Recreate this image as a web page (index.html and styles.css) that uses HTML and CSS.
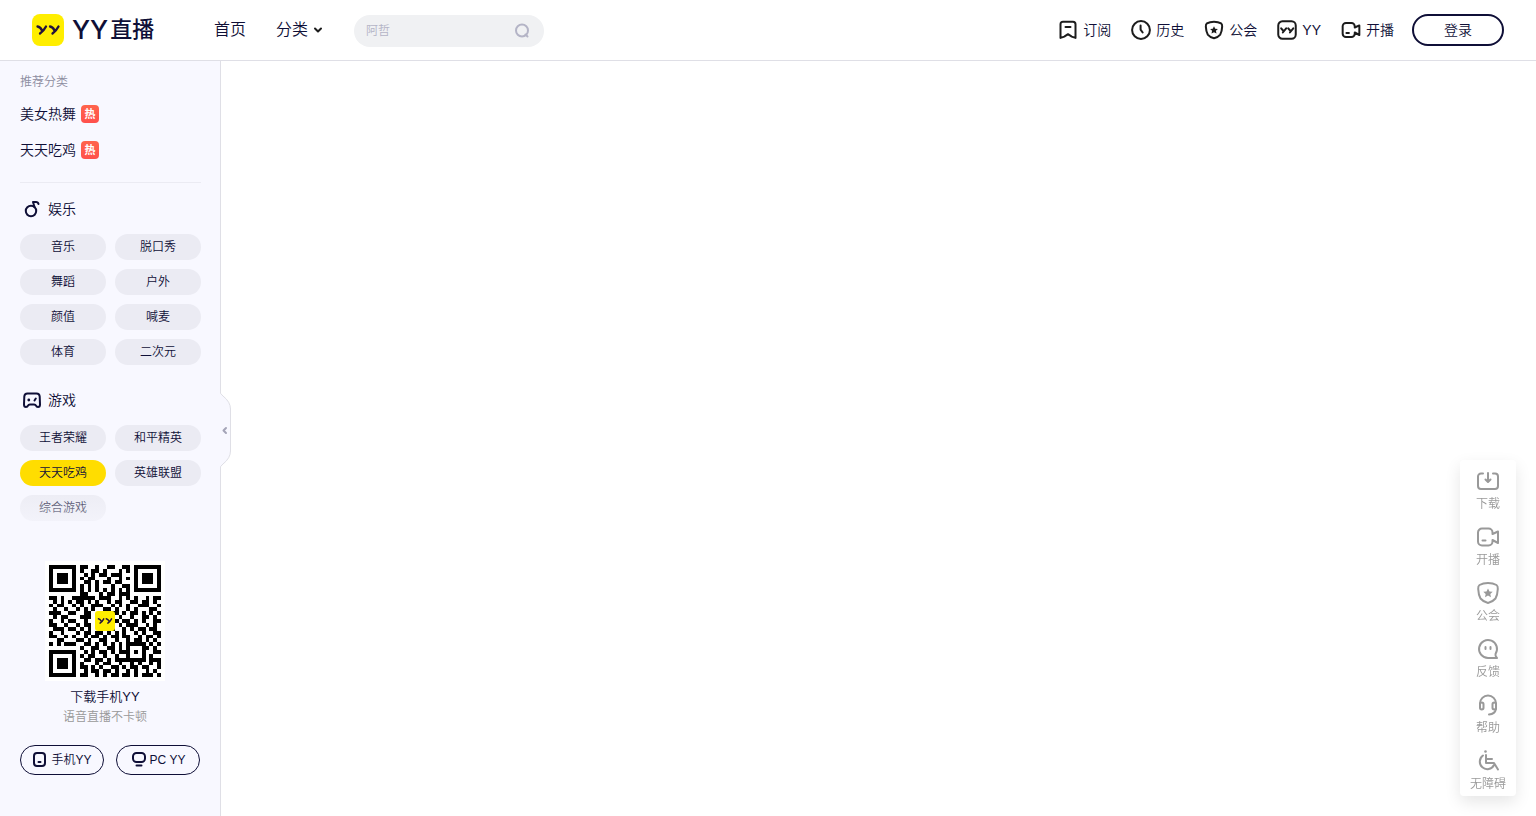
FILE: index.html
```html
<!DOCTYPE html>
<html lang="zh-CN">
<head>
    <meta charset="UTF-8">
    <meta name="viewport" content="width=device-width, initial-scale=1.0">
    <title>YY直播</title>
    <link rel="stylesheet" href="styles.css">
</head>
<body>

    <!-- icons used more than once -->
    <svg class="sprite" aria-hidden="true">
        <symbol id="icon-yy" viewBox="0 0 32 32">
            <path d="M5.500 12.500Q8.500 13 10 16.500M14 12.500Q12 16.500 8 19.500M18 12.500Q21 13 22.500 16.500M26.500 12.500Q24.500 16.500 20.500 19.500" fill="none" stroke="#23123c" stroke-width="2.300" stroke-linecap="round"/>
        </symbol>
        <symbol id="icon-camera" viewBox="0 0 24 24">
            <path d="M16.500 9V7.500a4 4 0 0 0-4-4H6a4 4 0 0 0-4 4v9a4 4 0 0 0 4 4h6.500a4 4 0 0 0 4-4V15l5.500 3V6.500L16.500 9M6.500 15.500h3"/>
        </symbol>
        <symbol id="icon-guild" viewBox="0 0 24 24">
            <path d="M12 2Q7 2 3.500 4Q2 5 2.200 8Q2.500 14 4.500 17.500Q7.500 21 12 22Q16.500 21 19.500 17.500Q21.500 14 21.800 8Q22 5 20.500 4Q17 2 12 2z"/>
            <path class="solid" d="M12 7.500l1.500 2.900 3.200.4-2.400 2.200.7 3.300-3-1.700-3 1.700.7-3.300-2.400-2.200 3.200-.4z"/>
        </symbol>
    </svg>

    <header class="header">
        <a class="logo" href="#">
            <svg class="logo-mark" viewBox="0 0 32 32" aria-hidden="true"><use href="#icon-yy"/></svg>
            <span class="logo-text"><span class="logo-yy">YY</span>直播</span>
        </a>
        <nav class="nav">
            <a href="#">首页</a>
            <a href="#">分类
                <svg class="arrow" viewBox="0 0 10 8" aria-hidden="true"><path d="M2 2.500l3 3 3-3"/></svg>
            </a>
        </nav>
        <form class="search">
            <input type="text" placeholder="阿哲" aria-label="搜索">
            <button type="button" aria-label="搜索">
                <svg viewBox="0 0 16 16"><circle cx="8" cy="7.500" r="6"/><path d="M11.500 11.500l2 2"/></svg>
            </button>
        </form>
        <nav class="user-nav">
            <a href="#">
                <svg viewBox="0 0 24 24"><path d="M6 2h12a3 3 0 0 1 3 3v16.500l-4.500-1.500-4.500-3-4.500 3-4.500 1.500V5a3 3 0 0 1 3-3zM9 8.500h6"/></svg>订阅
            </a>
            <a href="#">
                <svg viewBox="0 0 24 24"><circle cx="12" cy="12" r="10.700"/><path d="M11.500 6.500v5l2.500 3.500"/></svg>历史
            </a>
            <a href="#"><svg viewBox="0 0 24 24"><use href="#icon-guild"/></svg>公会</a>
            <a href="#">
                <svg viewBox="0 0 24 24"><rect x="1.500" y="1.500" width="21" height="21" rx="5"/><path d="M5 10l3 3.500M11 10l-4 5M13.500 10l3 3.500M19.500 10l-4 5"/></svg>YY
            </a>
            <a href="#"><svg viewBox="0 0 24 24"><use href="#icon-camera"/></svg>开播</a>
        </nav>
        <button class="login" type="button">登录</button>
    </header>

    <div class="page">
        <aside class="sidebar">
            <div class="menu">
                <h2 class="menu-title">推荐分类</h2>
                <ul class="hot-list">
                    <li><a href="#">美女热舞<span class="hot">热</span></a></li>
                    <li><a href="#">天天吃鸡<span class="hot">热</span></a></li>
                </ul>

                <section class="group">
                    <h3>
                        <svg viewBox="0 0 24 24"><circle cx="11" cy="14" r="5.200"/><path d="M14.500 10L13 5h3q2 0 2.500 2"/></svg>娱乐
                    </h3>
                    <div class="tags">
                        <a href="#">音乐</a>
                        <a href="#">脱口秀</a>
                        <a href="#">舞蹈</a>
                        <a href="#">户外</a>
                        <a href="#">颜值</a>
                        <a href="#">喊麦</a>
                        <a href="#">体育</a>
                        <a href="#">二次元</a>
                    </div>
                </section>

                <section class="group">
                    <h3>
                        <svg viewBox="0 0 24 24"><path d="M7.500 5.500h9q3 0 3.200 3l.3 8q0 2.500-2 2.500-1.500 0-2-1.300-.5-1.200-2-1.200h-4q-1.500 0-2 1.200-.5 1.300-2 1.300-2 0-2-2.500l.3-8q.2-3 3.200-3zM15.800 10.500l-1.300 2"/><circle class="solid" cx="8.800" cy="12" r="1.400"/></svg>游戏
                    </h3>
                    <div class="tags">
                        <a href="#">王者荣耀</a>
                        <a href="#">和平精英</a>
                        <a class="active" href="#">天天吃鸡</a>
                        <a href="#">英雄联盟</a>
                        <a href="#">综合游戏</a>
                    </div>
                </section>
            </div>

            <div class="download">
                <div class="qr">
                    <svg id="qrcode" viewBox="0 0 29 29" shape-rendering="crispEdges" role="img" aria-label="下载二维码"></svg>
                    <svg class="qr-logo" viewBox="0 0 32 32" aria-hidden="true"><use href="#icon-yy"/></svg>
                </div>
                <p class="download-title">下载手机YY</p>
                <p class="download-text">语音直播不卡顿</p>
            </div>
            <div class="download-links">
                <a href="#">
                    <svg viewBox="0 0 16 16"><rect x="2" y="1" width="11" height="13" rx="3"/><path d="M6.500 10h2"/></svg>手机YY
                </a>
                <a href="#">
                    <svg viewBox="0 0 16 16"><rect x="2" y="1" width="12" height="9" rx="3.500"/><path d="M5.500 13.500h5"/></svg>PC YY
                </a>
            </div>

            <button class="toggle" type="button" aria-label="收起">
                <svg viewBox="0 0 12 78"><path class="toggle-bg" d="M0 0Q0 3 3 5Q10.500 11 10.500 18V60Q10.500 67 3 73Q0 75 0 78"/><path class="toggle-arrow" d="M6 37l-2.500 2.500L6 42"/></svg>
            </button>
        </aside>
        <main class="content"></main>
    </div>

    <nav class="toolbar">
        <a href="#">
            <svg viewBox="0 0 24 24"><path d="M7 4.500H5a3 3 0 0 0-3 3V17a3 3 0 0 0 3 3h14a3 3 0 0 0 3-3V7.500a3 3 0 0 0-3-3h-2M12 4v8M9.500 10.500L12 13l2.500-2.500"/></svg>下载
        </a>
        <a href="#"><svg viewBox="0 0 24 24"><use href="#icon-camera"/></svg>开播</a>
        <a href="#"><svg viewBox="0 0 24 24"><use href="#icon-guild"/></svg>公会</a>
        <a href="#">
            <svg viewBox="0 0 24 24"><path d="M21 21h-9a9 9 0 1 1 7.500-4q-.5 2 1.500 4zM9.500 10v2M14.500 10v2"/></svg>反馈
        </a>
        <a href="#">
            <svg viewBox="0 0 24 24"><path d="M4 12V10.500a8 8 0 0 1 16 0v5.500q-1 5-7 5.500"/><rect x="4" y="9.500" width="3.500" height="7" rx="1.750"/><rect x="16.500" y="9.500" width="3.500" height="7" rx="1.750"/></svg>帮助
        </a>
        <a href="#">
            <svg viewBox="0 0 24 24"><path d="M7 6.500a7.500 7.500 0 1 0 11 9.500M10 6v8h8l4 6.500M10 10h6"/><circle class="solid" cx="9.500" cy="2.500" r="1.300"/></svg>无障碍
        </a>
    </nav>

    <script>
        // Modules du QR code : # = noir
        const rows = [
            '#######.##..#..##..##.#######',
            '#.....#.#..##.#...#.#.#.....#',
            '#.###.#..#.#.##.###...#.###.#',
            '#.###.#.#.##...#..#.#.#.###.#',
            '#.###.#..##.#.##.##...#.###.#',
            '#.....#.#.#.#...#..##.#.....#',
            '#######.#.#.#.#.#.#.#.#######',
            '........##...#.##.###........',
            '##.#..######.###..#.#.#..#.##',
            '.#.#.#.##.#.#..#.##..##.##.#.',
            '#.##..#.#..###..#.#.#..###..#',
            '.#..#..#.#.#..##.#..#.#...##.',
            '###..##..##.....##.#.##.#.#.#',
            '.#.##...###.....#.#..#..##.#.',
            '#..#.##..#......##.##.#.#..##',
            '##..#..#.##.....#.#.###..#.#.',
            '.###.##.#.#.....#..#.#.##.##.',
            '#..#...#.##.##.#.#.#..#.#..##',
            '##..#.#..#.##.#.##.##..#.##.#',
            '..##...##.#..##..#..#.##.#.#.',
            '#.#.###..##.#.#.#.#.#####.#.#',
            '........#..##..##.#.#...##.#.',
            '#######..#.#.##.#.###.#.#..##',
            '#.....#.#.##..#..#..#...#.#..',
            '#.###.#..##.##.#.########.###',
            '#.###.#.#...#.##..#..#.#..#.#',
            '#.###.#.##.#.#..##.#.##.##..#',
            '#.....#..#.##.##.#..#.#..#.#.',
            '#######.##..#.#.##.##.#.###.#'
        ];
        const path = document.createElementNS('http://www.w3.org/2000/svg', 'path');
        let d = '';
        rows.forEach(function(row, y) {
            for (let x = 0; x < row.length; x++) {
                if (row[x] === '#') d += `M${x} ${y}h1v1h-1z`;
            }
        });
        path.setAttribute('d', d);
        document.getElementById('qrcode').appendChild(path);
    </script>

</body>
</html>
```
FILE: styles.css
```css
* {
    box-sizing: border-box;
}
body {
    display: flex;
    flex-direction: column;
    min-height: 100vh;
    margin: 0;
    font-family: "Liberation Sans", "Noto Sans CJK SC", sans-serif;
    font-size: 14px;
    font-weight: 350;
    line-height: 18px;
    color: #0f0f37;
    background-color: #fff;
}
a {
    color: inherit;
    text-decoration: none;
}
h2, h3, p, ul {
    margin: 0;
    padding: 0;
    font-weight: inherit;
    list-style: none;
}
button, input {
    font-family: inherit;
    font-weight: inherit;
    line-height: inherit;
    color: inherit;
}
button {
    padding: 0;
    border: none;
    background: none;
    cursor: pointer;
}
svg {
    flex: none;
    fill: none;
    stroke: currentColor;
    stroke-width: 2;
    stroke-linejoin: round;
    stroke-linecap: round;
}
.sprite {
    display: none;
}
.solid {
    fill: currentColor;
    stroke: none;
}

/* Header */
.header {
    display: flex;
    align-items: center;
    height: 61px;
    padding: 0 32px;
    border-bottom: 1px solid #dfdfe6;
}
.logo {
    display: flex;
    align-items: center;
    gap: 8px;
    width: 182px;
}
.logo-mark {
    width: 32px;
    height: 32px;
    border-radius: 8px;
    background-color: #ffee00;
}
.logo-text {
    display: flex;
    align-items: center;
    gap: 2px;
    font-size: 22px;
    font-weight: 500;
    line-height: 32px;
    white-space: nowrap;
}
.logo-yy {
    font-family: Inter, sans-serif;
    font-size: 26px;
}
.nav {
    display: flex;
    gap: 30px;
    width: 140px;
    font-size: 16px;
}
.nav a {
    display: flex;
    align-items: center;
    gap: 5px;
    white-space: nowrap;
}
.arrow {
    width: 10px;
    height: 8px;
    color: #1c1c1c;
}
.search {
    display: flex;
    align-items: center;
    width: 190px;
    height: 32px;
    margin-top: 2px;
    padding: 0 14px 0 12px;
    border-radius: 16px;
    background-color: #f0f1f3;
}
.search input {
    flex: 1;
    min-width: 0;
    padding: 0;
    border: none;
    outline: none;
    background: none;
    font-size: 12px;
}
.search input::placeholder {
    color: #b4b4c6;
}
.search button {
    display: flex;
    color: #b4b4c6;
}
.search svg {
    width: 16px;
    height: 16px;
}
.user-nav {
    display: flex;
    gap: 20px;
    margin-left: auto;
    margin-right: 18px;
}
.user-nav a {
    display: flex;
    align-items: center;
    gap: 5px;
}
.user-nav svg {
    width: 20px;
    height: 20px;
    color: #1c1c1c;
    stroke-width: 2.4;
}
.login {
    width: 92px;
    height: 32px;
    border: 2px solid #0f0f37;
    border-radius: 16px;
    font-size: 14px;
}

/* Sidebar */
.page {
    display: flex;
    flex: 1;
}
.content {
    flex: 1;
}
.sidebar {
    position: relative;
    width: 221px;
    padding: 10px 19px 0 20px;
    border-right: 1px solid #dfdfe6;
    background-color: #f8f8ff;
}
.menu {
    position: relative;
    padding-bottom: 24px;
}
/* fades out the bottom of the list */
.menu::after {
    content: "";
    position: absolute;
    left: 0;
    right: 0;
    bottom: 0;
    height: 60px;
    background: linear-gradient(rgba(248, 248, 255, 0), #f8f8ff);
    pointer-events: none;
}
.menu-title {
    font-size: 12px;
    line-height: 22px;
    color: #8d8d9f;
}
.hot-list {
    margin-top: 3px;
    padding-bottom: 14px;
    border-bottom: 1px solid #ebebf3;
}
.hot-list a {
    display: flex;
    align-items: center;
    gap: 5px;
    height: 36px;
}
.hot {
    width: 18px;
    height: 18px;
    border-radius: 4px;
    background: linear-gradient(#ff644c, #ff504c);
    color: #fff;
    font-size: 11px;
    font-weight: bold;
    text-align: center;
}
.group h3 {
    display: flex;
    align-items: center;
    gap: 4px;
    height: 51px;
    font-size: 14px;
}
.group + .group {
    margin-top: 9px;
}
.group h3 svg {
    width: 24px;
    height: 24px;
}
.tags {
    display: grid;
    grid-template-columns: 1fr 1fr;
    gap: 9px;
}
.tags a {
    height: 26px;
    border-radius: 13px;
    background-color: #ebebf3;
    font-size: 12px;
    line-height: 26px;
    text-align: center;
}
.tags .active {
    background-color: #ffdd00;
}
.download {
    width: 170px;
    margin-top: 16px;
    text-align: center;
}
.qr {
    position: relative;
    width: 120px;
    height: 120px;
    margin: 0 auto;
    padding: 4px;
    background-color: #fff;
}
#qrcode {
    display: block;
    width: 112px;
    height: 112px;
    fill: #000;
    stroke: none;
}
.qr-logo {
    position: absolute;
    top: 50px;
    left: 50px;
    width: 20px;
    height: 20px;
    border-radius: 3px;
    background-color: #ffee00;
}
.download-title {
    margin-top: 6px;
    font-size: 13px;
    line-height: 20px;
}
.download-text {
    font-size: 12px;
    line-height: 20px;
    color: #999;
}
.download-links {
    display: flex;
    gap: 12px;
    margin: 18px 0;
}
.download-links a {
    display: flex;
    align-items: center;
    justify-content: center;
    gap: 3px;
    width: 84px;
    height: 30px;
    border: 1px solid #0f0f37;
    border-radius: 15px;
    font-size: 12px;
}
.download-links svg {
    width: 16px;
    height: 16px;
}
.toggle {
    position: absolute;
    top: 330px;
    right: -12px;
    width: 12px;
    height: 78px;
}
.toggle svg {
    display: block;
    width: 12px;
    height: 78px;
}
.toggle-bg {
    fill: #f8f8ff;
    stroke: #dfdfe6;
    stroke-width: 1;
}
.toggle-arrow {
    stroke: #a5a5b8;
}

/* Floating toolbar */
.toolbar {
    position: fixed;
    right: 20px;
    bottom: 20px;
    width: 56px;
    border-radius: 4px;
    background-color: #fff;
    box-shadow: 0 6px 16px rgba(0, 0, 0, 0.1);
}
.toolbar a {
    display: flex;
    flex-direction: column;
    align-items: center;
    height: 56px;
    padding-top: 9px;
    font-size: 12px;
    line-height: 22px;
    color: #999;
}
.toolbar svg {
    width: 24px;
    height: 24px;
}
```
